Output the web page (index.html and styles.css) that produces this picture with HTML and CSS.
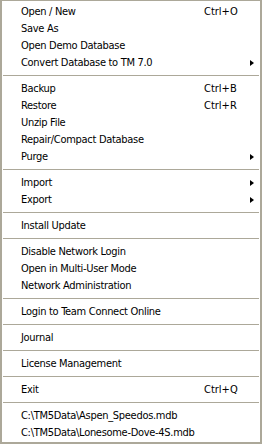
FILE: index.html
```html
<!DOCTYPE html>
<html lang="en">
<head>
<meta charset="UTF-8">
<title>File Menu</title>
<link rel="stylesheet" href="styles.css">
</head>
<body>
<div class="menu">
  <div class="item"><span class="label">Open / New</span><span class="key">Ctrl+O</span></div>
  <div class="item"><span class="label">Save As</span></div>
  <div class="item"><span class="label">Open Demo Database</span></div>
  <div class="item"><span class="label">Convert Database to TM 7.0</span><span class="key"></span><span class="arrow"></span></div>
  <div class="sep"></div>
  <div class="item"><span class="label">Backup</span><span class="key">Ctrl+B</span></div>
  <div class="item"><span class="label">Restore</span><span class="key">Ctrl+R</span></div>
  <div class="item"><span class="label">Unzip File</span></div>
  <div class="item"><span class="label">Repair/Compact Database</span></div>
  <div class="item"><span class="label">Purge</span><span class="key"></span><span class="arrow"></span></div>
  <div class="sep"></div>
  <div class="item"><span class="label">Import</span><span class="key"></span><span class="arrow"></span></div>
  <div class="item"><span class="label">Export</span><span class="key"></span><span class="arrow"></span></div>
  <div class="sep"></div>
  <div class="item"><span class="label">Install Update</span></div>
  <div class="sep"></div>
  <div class="item"><span class="label">Disable Network Login</span></div>
  <div class="item"><span class="label">Open in Multi-User Mode</span></div>
  <div class="item"><span class="label">Network Administration</span></div>
  <div class="sep"></div>
  <div class="item"><span class="label">Login to Team Connect Online</span></div>
  <div class="sep"></div>
  <div class="item"><span class="label">Journal</span></div>
  <div class="sep"></div>
  <div class="item"><span class="label">License Management</span></div>
  <div class="sep"></div>
  <div class="item"><span class="label">Exit</span><span class="key">Ctrl+Q</span></div>
  <div class="sep"></div>
  <div class="item"><span class="label">C:\TM5Data\Aspen_Speedos.mdb</span></div>
  <div class="item"><span class="label">C:\TM5Data\Lonesome-Dove-4S.mdb</span></div>
</div>
</body>
</html>
```

FILE: styles.css
```css
body {
  margin: 0;
  background: #fff;
  font-family: 'DejaVu Sans', Tahoma, sans-serif;
  font-stretch: condensed;
  font-size: 11px;
  color: #000;
}

.menu {
  width: 262px;
  height: 444px;
  box-sizing: border-box;
  border: 2px solid #aca899;
  border-top-width: 1px;
  padding: 2px 0 1px;
  background: #fff;
}

.item {
  display: flex;
  align-items: center;
  height: 17px;
  line-height: 17px;
  padding-left: 19px;
  white-space: nowrap;
}

.label {
  width: 183px;
  letter-spacing: -0.3px;
}

.key {
  width: 46px;
}

/* submenu arrow */
.arrow {
  width: 0;
  height: 0;
  border-left: 4px solid #000;
  border-top: 3.5px solid transparent;
  border-bottom: 3.5px solid transparent;
}

.sep {
  height: 9px;
  box-sizing: border-box;
  padding: 4px 1px 0;
}

.sep::before {
  content: "";
  display: block;
  height: 1px;
  background: #aca899;
}
```
